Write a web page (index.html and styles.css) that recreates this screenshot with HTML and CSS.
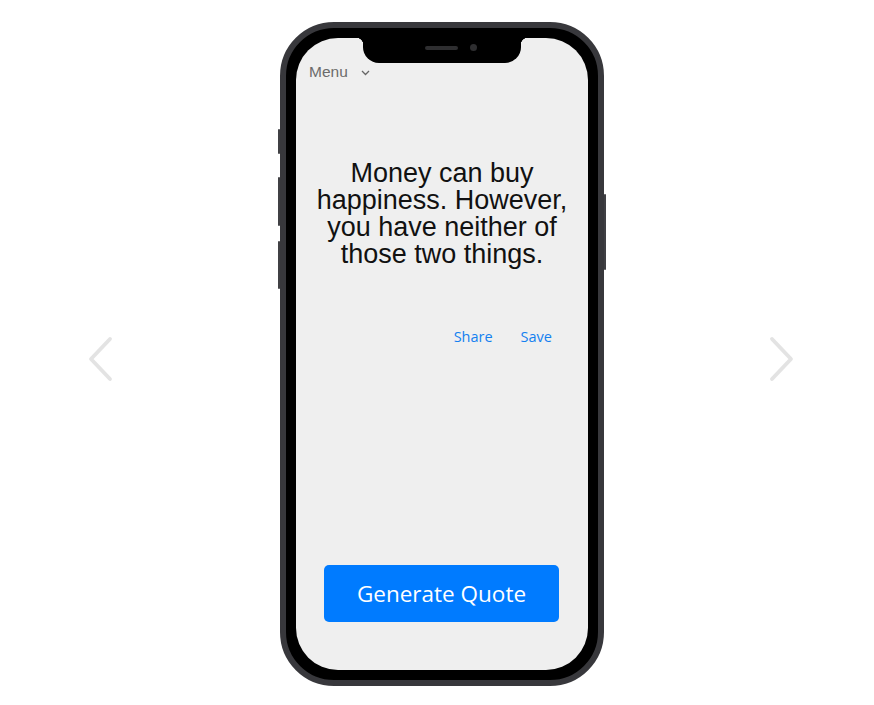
FILE: index.html
```html
<!DOCTYPE html>
<html lang="en">
<head>
<meta charset="utf-8">
<title>Quote Generator</title>
<link rel="stylesheet" href="styles.css">
</head>
<body>
<div class="stage">
  <button class="nav nav-prev" aria-label="Previous">
    <svg width="26" height="46" viewBox="0 0 26 46"><path d="M23 3 L4 23 L23 43" fill="none" stroke="#e3e3e3" stroke-width="3.8" stroke-linecap="round" stroke-linejoin="round"/></svg>
  </button>
  <div class="phone">
    <span class="side-btn side-a"></span>
    <span class="side-btn side-b"></span>
    <span class="side-btn side-c"></span>
    <span class="side-btn side-r"></span>
    <div class="screen">
      <div class="notch"><span class="speaker"></span><span class="camera"></span></div>
      <div class="menu">Menu
        <svg class="chev" width="9" height="6" viewBox="0 0 9 6"><path d="M1 1 L4.5 4.5 L8 1" fill="none" stroke="#666" stroke-width="1.3"/></svg>
      </div>
      <p class="quote">Money can buy happiness. However, you have neither of those two things.</p>
      <div class="actions"><a class="action">Share</a><a class="action">Save</a></div>
      <button class="generate">Generate Quote</button>
    </div>
  </div>
  <button class="nav nav-next" aria-label="Next">
    <svg width="26" height="46" viewBox="0 0 26 46"><path d="M3 3 L22 23 L3 43" fill="none" stroke="#e3e3e3" stroke-width="3.8" stroke-linecap="round" stroke-linejoin="round"/></svg>
  </button>
</div>
</body>
</html>
```
FILE: styles.css
```css
html, body {
  margin: 0;
  padding: 0;
  background: #ffffff;
}
.stage {
  width: 874px;
  height: 705px;
  display: flex;
  align-items: flex-start;
  padding-left: 87px;
  box-sizing: border-box;
}
.nav {
  background: none;
  border: 0;
  padding: 0;
  margin-top: 336px;
  width: 26px;
  height: 46px;
  display: block;
}
.nav svg { display: block; }
.nav-prev { margin-right: 167px; }
.nav-next { margin-left: 165px; }
.phone {
  position: relative;
  margin-top: 22px;
  width: 324px;
  height: 664px;
  box-sizing: border-box;
  border: 6px solid #38383c;
  background: #000;
  border-radius: 54px;
  padding: 10px;
}
.side-btn {
  position: absolute;
  width: 2px;
  background: #404044;
  border-radius: 1px;
}
.side-a { left: -8px; top: 101px; height: 25px; }
.side-b { left: -8px; top: 149px; height: 49px; }
.side-c { left: -8px; top: 213px; height: 48px; }
.side-r { right: -8px; top: 166px; height: 76px; }
.screen {
  position: relative;
  height: 100%;
  background: #efefef;
  border-radius: 42px;
  display: flex;
  flex-direction: column;
  padding-top: 25px;
  padding-bottom: 48px;
  box-sizing: border-box;
}
.notch {
  position: absolute;
  top: 0;
  left: 67px;
  width: 158px;
  height: 25px;
  background: #000;
  border-radius: 0 0 16px 16px;
  display: flex;
  align-items: flex-start;
  padding: 8px 0 0 62px;
  box-sizing: border-box;
  gap: 12px;
}
.notch::before,
.notch::after {
  content: "";
  position: absolute;
  top: 0;
  width: 7px;
  height: 7px;
}
.notch::before {
  left: -7px;
  background: radial-gradient(circle at 0 100%, transparent 7px, #000 7.5px);
}
.notch::after {
  right: -7px;
  background: radial-gradient(circle at 100% 100%, transparent 7px, #000 7.5px);
}
.speaker {
  width: 33px;
  height: 4px;
  border-radius: 2px;
  background: #2e2e30;
}
.camera {
  width: 7px;
  height: 7px;
  margin-top: -2px;
  border-radius: 50%;
  background: #2e2e30;
}
.menu {
  font-family: "Liberation Sans", Arial, sans-serif;
  font-size: 15.5px;
  line-height: 18px;
  color: #6b6b6b;
  padding-left: 13px;
  display: flex;
  align-items: center;
  gap: 13px;
}
.chev { display: block; margin-top: 1px; }
.quote {
  margin: 79px 0 0;
  padding: 0 16px;
  font-family: "Liberation Sans", Arial, sans-serif;
  font-size: 27px;
  line-height: 27px;
  color: #111;
  text-align: center;
}
.actions {
  margin-top: 59px;
  display: flex;
  justify-content: flex-end;
  gap: 28px;
  padding-right: 36px;
}
.action {
  font-family: "Open Sans", "Noto Sans", sans-serif;
  font-size: 14.5px;
  line-height: 20px;
  color: #1380f0;
}
.generate {
  margin: auto 29px 0 28px;
  height: 57px;
  border: 0;
  border-radius: 5px;
  background: #007bff;
  color: #fff;
  font-family: "Open Sans", "Noto Sans", sans-serif;
  font-size: 22.5px;
}
```
